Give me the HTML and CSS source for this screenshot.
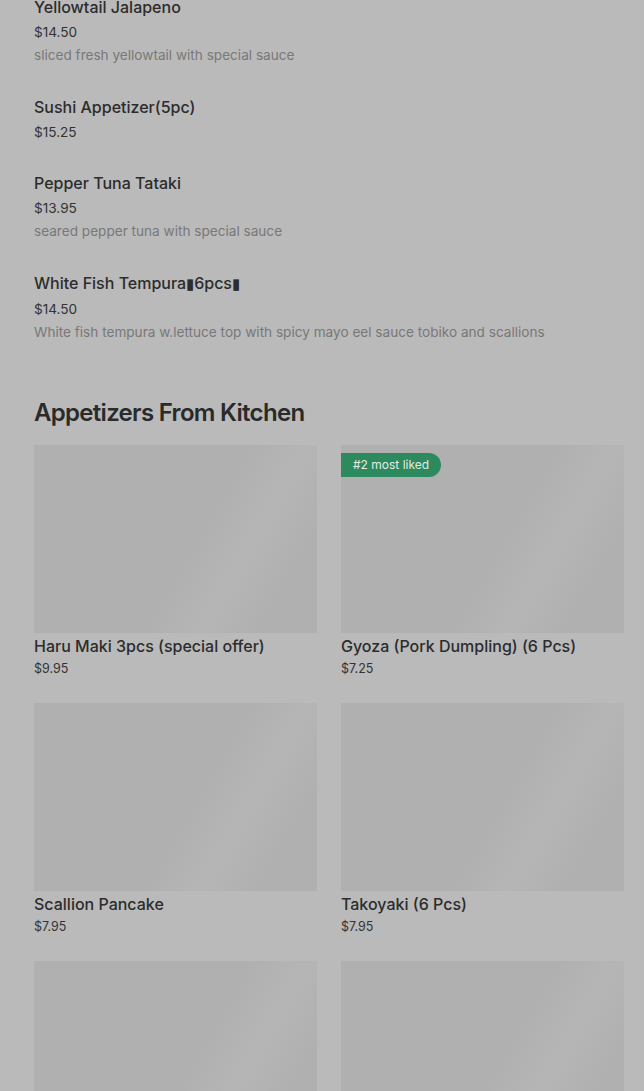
FILE: index.html
```html
<!DOCTYPE html>
<html lang="en">
<head>
  <meta charset="UTF-8" />
  <meta name="viewport" content="width=device-width, initial-scale=1.0"/>
  <title>Menu</title>
  <link rel="stylesheet" href="styles.css">
</head>
<body>
  <div class="page">
    <!-- plain list section (scrolled part) -->
    <ul class="item-list">
      <li class="item">
        <div class="item-title">Yellowtail Jalapeno</div>
        <div class="item-price">$14.50</div>
        <div class="item-desc">sliced fresh yellowtail with special sauce</div>
      </li>
      <li class="item">
        <div class="item-title">Sushi Appetizer(5pc)</div>
        <div class="item-price">$15.25</div>
      </li>
      <li class="item">
        <div class="item-title">Pepper Tuna Tataki</div>
        <div class="item-price">$13.95</div>
        <div class="item-desc">seared pepper tuna with special sauce</div>
      </li>
      <li class="item">
        <div class="item-title">White Fish Tempura<span class="tofu">▮</span>6pcs<span class="tofu">▮</span></div>
        <div class="item-price">$14.50</div>
        <div class="item-desc">White fish tempura w.lettuce top with spicy mayo eel sauce tobiko and scallions</div>
      </li>
    </ul>

    <h2 class="section-title">Appetizers From Kitchen</h2>
    <div class="card-grid">
      <div class="card">
        <div class="card-img"></div>
        <div class="item-title">Haru Maki 3pcs (special offer)</div>
        <div class="item-price">$9.95</div>
      </div>
      <div class="card">
        <div class="card-img"><span class="badge">#2 most liked</span></div>
        <div class="item-title">Gyoza (Pork Dumpling) (6 Pcs)</div>
        <div class="item-price">$7.25</div>
      </div>
      <div class="card">
        <div class="card-img"></div>
        <div class="item-title">Scallion Pancake</div>
        <div class="item-price">$7.95</div>
      </div>
      <div class="card">
        <div class="card-img"></div>
        <div class="item-title">Takoyaki (6 Pcs)</div>
        <div class="item-price">$7.95</div>
      </div>
      <div class="card">
        <div class="card-img"></div>
      </div>
      <div class="card">
        <div class="card-img"></div>
      </div>
    </div>
  </div>
</body>
</html>
```

FILE: styles.css
```css
body {
  margin: 0;
  padding: 0;
  background-color: #bababa;
  font-family: Inter, 'Noto Sans', sans-serif;
  color: #2c2c2c;
  overflow: hidden;
}
.page { padding: 0 20px 0 34px; }
.item-list {
  list-style: none;
  margin: -5px 0 0;
  padding: 0;
}
.item { margin-bottom: 28px; }
.item-title {
  font-size: 16px;
  font-weight: 500;
  line-height: 24px;
  color: #2c2c2c;
}
.tofu { font-size: 15px; }
.item-price {
  font-size: 13.6px;
  line-height: 24px;
  color: #333;
  padding-top: 1px;
  height: 23px;
}
.item-desc {
  font-size: 13.6px;
  line-height: 24px;
  color: #787878;
}
.section-title {
  margin: 53px 0 16px;
  font-size: 24px;
  line-height: 32px;
  font-weight: 600;
  letter-spacing: -0.7px;
  color: #2a2a2a;
}
.card-grid {
  display: grid;
  grid-template-columns: 1fr 1fr;
  column-gap: 24px;
}
.card { height: 258px; }
.card-img {
  position: relative;
  height: 188px;
  background: linear-gradient(120deg, #b0b0b0 0%, #b0b0b0 55%, #b5b5b5 70%, #b0b0b0 85%, #b0b0b0 100%);
}
.card .item-title { margin-top: 1px; }
.card .item-price { line-height: 22px; height: 22px; padding-top: 0; font-size: 12.5px; }
.badge {
  position: absolute;
  top: 8px;
  left: 0;
  height: 24px;
  line-height: 24px;
  padding: 0 12px;
  font-size: 12px;
  color: #e3ebe6;
  background: #2d8a5f;
  border-radius: 0 12px 12px 0;
}
```
